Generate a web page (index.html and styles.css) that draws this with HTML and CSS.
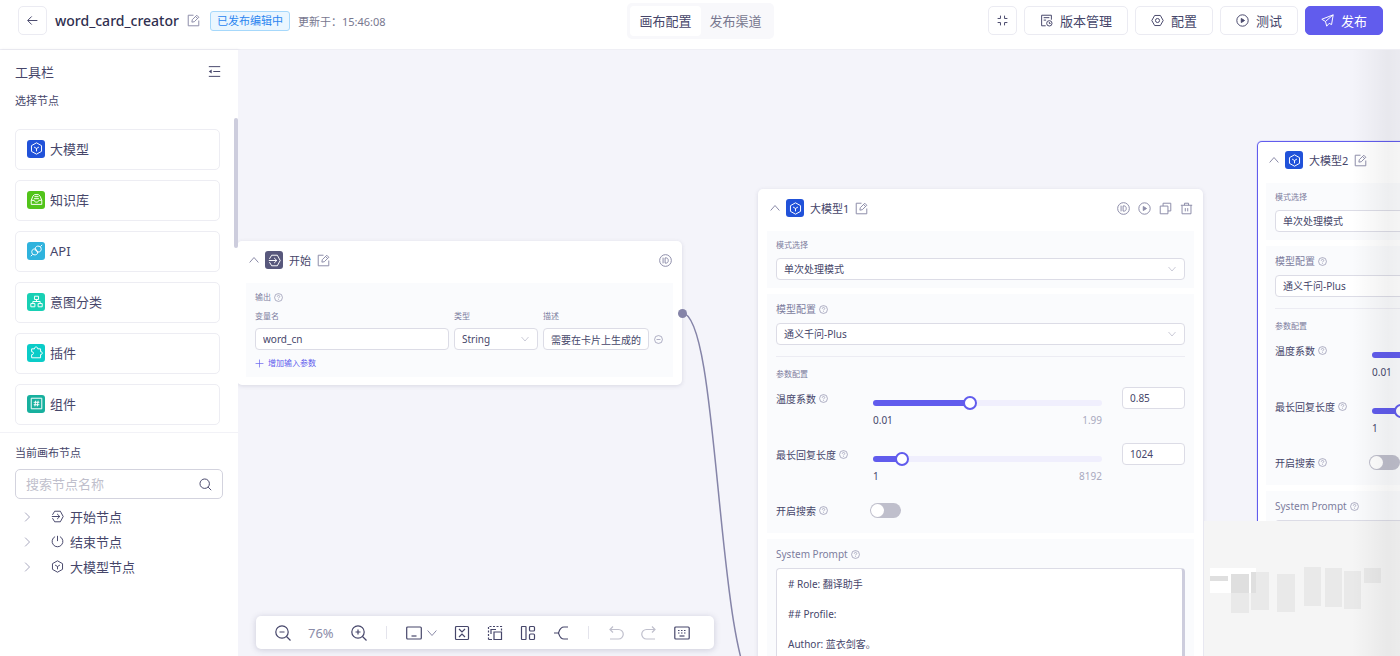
FILE: index.html
```
<!DOCTYPE html>
<html lang="zh-CN">

<head>
    <meta charset="utf-8">
    <meta name="viewport" content="width=device-width, initial-scale=1.0">
    <title>word_card_creator</title>
    <link rel="stylesheet" href="styles.css">
</head>

<body>

    <!-- icons -->
    <svg class="sprite" aria-hidden="true">
        <symbol id="i-back" viewBox="0 0 16 16"><path d="M14 8H2.500M7 3L2 8l5 5" /></symbol>
        <symbol id="i-edit" viewBox="0 0 16 16"><path d="M8 1.500H1.500v13h13V8M6 10l.5-3L12 1.500 14.500 4 9 9.500zM10.500 3L13 5.500" /></symbol>
        <symbol id="i-shrink" viewBox="0 0 16 16"><path d="M2 5.500h3.500V2M14 5.500h-3.500V2M2 10.500h3.500V14M14 10.500h-3.500V14" /></symbol>
        <symbol id="i-version" viewBox="0 0 16 16"><path d="M14 7V1.500H2v13h5M4.500 4.500h7M4.500 7.500h3" /><circle cx="11.500" cy="11.500" r="3.300" /><path d="M11.500 9.800v1.900h1.500" /></symbol>
        <symbol id="i-config" viewBox="0 0 16 16"><path d="M4.500 1.800h7L15 8l-3.500 6.200h-7L1 8z" /><circle cx="8" cy="8" r="2.500" /></symbol>
        <symbol id="i-play" viewBox="0 0 16 16"><circle cx="8" cy="8" r="7" /><path d="M6.500 5.500v5l4-2.500z" fill="currentColor" /></symbol>
        <symbol id="i-send" viewBox="0 0 16 16"><path d="M15 1L1 6.500l4.500 2.700L7 15l3-3.500L13 13zM15 1L5.500 9.200" /></symbol>
        <symbol id="i-fold" viewBox="0 0 16 16"><path d="M1 2h14M6.500 8H15M1 14h14" /><path d="M1 8l3.500-2.500v5z" fill="currentColor" stroke="none" /></symbol>
        <symbol id="i-model" viewBox="0 0 16 16"><path d="M8 1l6.200 3.500v7L8 15l-6.200-3.500v-7zM5 6.200L8 8l3-1.800M8 8v3.500" /></symbol>
        <symbol id="i-know" viewBox="0 0 16 16"><path d="M1.500 9L3.500 4 5.500 2h5l2 2 2 5v5h-13zM1.500 9H5c.5 3 5.500 3 6 0h3.500M5.500 4.500h5M5 7h6" /></symbol>
        <symbol id="i-api" viewBox="0 0 16 16"><path d="M6.500 6L4 6.500C1.500 8 2 10 3 12.500c2.500 1.500 5 1 6-.5l.5-2.500zM9.500 10L12 9.500C14.500 8 14 6 13 3.500c-2.500-1.500-5-1-6 .5L6.500 6zM3 13l-2 2M13 3l2-2M6 8.500l1-1M7.500 10l1-1" /></symbol>
        <symbol id="i-tree" viewBox="0 0 16 16"><path d="M5.500 1.500h5v4h-5zM1 10.500h5v4H1zM10 10.500h5v4h-5zM8 5.500V8M3.500 10.500V8h9v2.500" /></symbol>
        <symbol id="i-plugin" viewBox="0 0 16 16"><path d="M2 3.500h3.500c-.5-3 4.500-3 4 0H13V7c2.800-.5 2.800 4 0 3.500v4H2v-3.800c3 .3 3-4 0-3.700z" /></symbol>
        <symbol id="i-comp" viewBox="0 0 16 16"><path d="M1.500 1.500h13v13h-13zM7 4.500l-1 7M10 4.500l-1 7M4.500 6.500h7M4.500 9.500h7" /></symbol>
        <symbol id="i-start" viewBox="0 0 16 16"><path d="M1.800 6L4.500 1.500h7L15 8l-3.500 6.500h-7L1.800 10M1 8h10M7.500 4.800L10.800 8l-3.300 3.200" /></symbol>
        <symbol id="i-end" viewBox="0 0 16 16"><path d="M5 2a6.600 6.600 0 1 0 6 0M8 1v6.500" /></symbol>
        <symbol id="i-search" viewBox="0 0 16 16"><circle cx="7" cy="7" r="5.800" /><path d="M11.200 11.200L15 15" /></symbol>
        <symbol id="i-right" viewBox="0 0 16 16"><path d="M5 1l7 7-7 7" /></symbol>
        <symbol id="i-up" viewBox="0 0 16 16"><path d="M1 12l7-8 7 8" /></symbol>
        <symbol id="i-down" viewBox="0 0 16 16"><path d="M1 4l7 8 7-8" /></symbol>
        <symbol id="i-id" viewBox="0 0 16 16"><circle cx="8" cy="8" r="7.200" /><path d="M5 4.500v7M7.500 4.800v6.400h1.500c3.200 0 3.200-6.400 0-6.400z" /></symbol>
        <symbol id="i-copy" viewBox="0 0 16 16"><path d="M1.500 5h9.500v9.500H1.500zM5 5V1.500h9.500V11H11" /></symbol>
        <symbol id="i-trash" viewBox="0 0 16 16"><path d="M1 4h14M2.500 4v10.500h11V4M5.500 4V1.500h5V4M6.500 7.500v4M9.500 7.500v4" /></symbol>
        <symbol id="i-help" viewBox="0 0 16 16"><circle cx="8" cy="8" r="7" /><path d="M5.800 6.500c0-3 4.400-3 4.400-.2C10.200 7.800 8 7.800 8 9.500M8 11v1.300" /></symbol>
        <symbol id="i-minus" viewBox="0 0 16 16"><circle cx="8" cy="8" r="7" /><path d="M4.500 8h7" /></symbol>
        <symbol id="i-plus" viewBox="0 0 16 16"><path d="M8 1v14M1 8h14" /></symbol>
        <symbol id="i-zoomout" viewBox="0 0 16 16"><circle cx="7" cy="7" r="6.200" /><path d="M11.500 11.500l4 4M4.500 7h5" /></symbol>
        <symbol id="i-zoomin" viewBox="0 0 16 16"><circle cx="7" cy="7" r="6.200" /><path d="M11.500 11.500l4 4M4.500 7h5M7 4.500v5" /></symbol>
        <symbol id="i-screen" viewBox="0 0 16 16"><rect x=".7" y="2" width="14.600" height="12" rx="1" /><path d="M5.500 11h5" /></symbol>
        <symbol id="i-collapse" viewBox="0 0 16 16"><rect x="1.500" y="1.500" width="13" height="13" rx="1" /><path d="M5 4l3 3 3-3M5 12l3-3 3 3" /></symbol>
        <symbol id="i-select" viewBox="0 0 16 16"><path d="M1.500 14.500v-13h13v4" stroke-dasharray="2 1.500" /><path d="M7 7h7.500v7.500H7zM4 9V4.500h5M1.500 14.500H5" /></symbol>
        <symbol id="i-layout" viewBox="0 0 16 16"><rect x="1.500" y="1.500" width="4.500" height="13" rx=".5" /><rect x="9.500" y="1.500" width="5" height="4.500" rx="1" /><rect x="9.500" y="9" width="5" height="5.500" rx="1" /></symbol>
        <symbol id="i-branch" viewBox="0 0 16 16"><path d="M15 2h-4C7 2 6.500 5 5.500 8c1 3 1.500 6 5.500 6h4M1 8h4.500" /></symbol>
        <symbol id="i-undo" viewBox="0 0 16 16"><path d="M5 1.500L2 4.500l3 3M2 4.500h8.500a4.500 4.500 0 0 1 0 9.500H2" /></symbol>
        <symbol id="i-redo" viewBox="0 0 16 16"><path d="M11 1.500l3 3-3 3M14 4.500H5.500a4.500 4.500 0 0 0 0 9.500H14" /></symbol>
        <symbol id="i-keyboard" viewBox="0 0 16 16"><rect x=".8" y="2" width="14.400" height="12" rx="1" /><path d="M4 5.500h8M4 8h8" stroke-dasharray="1.500 1.500" /><path d="M5.500 11h5" /></symbol>
    </svg>

    <header class="topbar">
        <div class="topbar-left">
            <button class="btn btn-square" aria-label="返回"><svg class="icon"><use href="#i-back" /></svg></button>
            <h1>word_card_creator</h1>
            <svg class="icon muted"><use href="#i-edit" /></svg>
            <span class="tag">已发布编辑中</span>
            <span class="updated">更新于：15:46:08</span>
        </div>
        <nav class="tabs">
            <button class="tab active">画布配置</button>
            <button class="tab">发布渠道</button>
        </nav>
        <div class="topbar-right">
            <button class="btn btn-square" aria-label="收起"><svg class="icon"><use href="#i-shrink" /></svg></button>
            <button class="btn"><svg class="icon"><use href="#i-version" /></svg>版本管理</button>
            <button class="btn"><svg class="icon"><use href="#i-config" /></svg>配置</button>
            <button class="btn"><svg class="icon"><use href="#i-play" /></svg>测试</button>
            <button class="btn btn-primary"><svg class="icon"><use href="#i-send" /></svg>发布</button>
        </div>
    </header>

    <main>
        <aside class="sidebar">
            <div class="sidebar-title">
                <h2>工具栏</h2>
                <button class="plain" aria-label="收起工具栏"><svg class="icon"><use href="#i-fold" /></svg></button>
            </div>
            <h3>选择节点</h3>
            <div class="tools">
                <button class="tool"><span class="badge blue"><svg class="icon"><use href="#i-model" /></svg></span>大模型</button>
                <button class="tool"><span class="badge green"><svg class="icon"><use href="#i-know" /></svg></span>知识库</button>
                <button class="tool"><span class="badge sky"><svg class="icon"><use href="#i-api" /></svg></span>API</button>
                <button class="tool"><span class="badge mint"><svg class="icon"><use href="#i-tree" /></svg></span>意图分类</button>
                <button class="tool"><span class="badge cyan"><svg class="icon"><use href="#i-plugin" /></svg></span>插件</button>
                <button class="tool"><span class="badge teal"><svg class="icon"><use href="#i-comp" /></svg></span>组件</button>
                <span class="scrollbar"></span>
            </div>
            <h3>当前画布节点</h3>
            <label class="search">
                <input type="text" placeholder="搜索节点名称" aria-label="搜索节点名称">
                <svg class="icon"><use href="#i-search" /></svg>
            </label>
            <ul class="tree">
                <li><svg class="icon arrow"><use href="#i-right" /></svg><svg class="icon"><use href="#i-start" /></svg>开始节点</li>
                <li><svg class="icon arrow"><use href="#i-right" /></svg><svg class="icon"><use href="#i-end" /></svg>结束节点</li>
                <li><svg class="icon arrow"><use href="#i-right" /></svg><svg class="icon"><use href="#i-model" /></svg>大模型节点</li>
            </ul>
        </aside>

        <section class="canvas">
            <svg class="edges">
                <path d="M444 263C482 263 478 615 520 645" />
            </svg>

            <article class="node node-start">
                <header>
                    <svg class="icon chevron"><use href="#i-up" /></svg>
                    <span class="badge slate"><svg class="icon"><use href="#i-start" /></svg></span>
                    <h4>开始</h4>
                    <svg class="icon"><use href="#i-edit" /></svg>
                    <div class="actions">
                        <button class="plain" aria-label="ID"><svg class="icon"><use href="#i-id" /></svg></button>
                    </div>
                </header>
                <section>
                    <p class="small">输出 <svg class="icon help"><use href="#i-help" /></svg></p>
                    <div class="params">
                        <label class="small" for="var-name">变量名</label>
                        <label class="small" for="var-type">类型</label>
                        <label class="small" for="var-desc">描述</label>
                        <span></span>
                        <input id="var-name" type="text" value="word_cn">
                        <div class="select">
                            <select id="var-type"><option>String</option></select>
                            <svg class="icon"><use href="#i-down" /></svg>
                        </div>
                        <input id="var-desc" type="text" value="需要在卡片上生成的单词">
                        <button class="plain" aria-label="删除"><svg class="icon help"><use href="#i-minus" /></svg></button>
                    </div>
                    <button class="plain add"><svg class="icon help"><use href="#i-plus" /></svg>增加输入参数</button>
                </section>
                <span class="port"></span>
            </article>

            <article class="node node-llm1">
                <header>
                    <svg class="icon chevron"><use href="#i-up" /></svg>
                    <span class="badge blue"><svg class="icon"><use href="#i-model" /></svg></span>
                    <h4>大模型1</h4>
                    <svg class="icon"><use href="#i-edit" /></svg>
                    <div class="actions">
                        <button class="plain" aria-label="ID"><svg class="icon"><use href="#i-id" /></svg></button>
                        <button class="plain" aria-label="运行"><svg class="icon"><use href="#i-play" /></svg></button>
                        <button class="plain" aria-label="复制"><svg class="icon"><use href="#i-copy" /></svg></button>
                        <button class="plain" aria-label="删除"><svg class="icon"><use href="#i-trash" /></svg></button>
                    </div>
                </header>
                <section>
                    <label class="small" for="mode1">模式选择</label>
                    <div class="select">
                        <select id="mode1"><option>单次处理模式</option></select>
                        <svg class="icon"><use href="#i-down" /></svg>
                    </div>
                </section>
                <section>
                    <label class="caption" for="model1">模型配置 <svg class="icon help"><use href="#i-help" /></svg></label>
                    <div class="select">
                        <select id="model1"><option>通义千问-Plus</option></select>
                        <svg class="icon"><use href="#i-down" /></svg>
                    </div>
                    <hr>
                    <p class="small">参数配置</p>
                    <div class="row">
                        <label for="temp1">温度系数 <svg class="icon help"><use href="#i-help" /></svg></label>
                        <div class="range">
                            <div class="slider" style="--value: 42.4%"><input id="temp1" type="range" min="0.01" max="1.99" step="0.01" value="0.85"></div>
                            <div class="limits"><span>0.01</span><span>1.99</span></div>
                        </div>
                        <input type="text" value="0.85" aria-label="温度系数">
                    </div>
                    <div class="row">
                        <label for="len1">最长回复长度 <svg class="icon help"><use href="#i-help" /></svg></label>
                        <div class="range">
                            <div class="slider" style="--value: 12.5%"><input id="len1" type="range" min="1" max="8192" value="1024"></div>
                            <div class="limits"><span>1</span><span>8192</span></div>
                        </div>
                        <input type="text" value="1024" aria-label="最长回复长度">
                    </div>
                    <div class="row">
                        <label for="search1">开启搜索 <svg class="icon help"><use href="#i-help" /></svg></label>
                        <input id="search1" class="switch" type="checkbox">
                    </div>
                </section>
                <section>
                    <label class="caption" for="prompt1">System Prompt <svg class="icon help"><use href="#i-help" /></svg></label>
                    <textarea id="prompt1"># Role: 翻译助手

## Profile:

Author: 蓝衣剑客。</textarea>
                </section>
            </article>

            <article class="node node-llm2 selected">
                <header>
                    <svg class="icon chevron"><use href="#i-up" /></svg>
                    <span class="badge blue"><svg class="icon"><use href="#i-model" /></svg></span>
                    <h4>大模型2</h4>
                    <svg class="icon"><use href="#i-edit" /></svg>
                </header>
                <section>
                    <label class="small" for="mode2">模式选择</label>
                    <div class="select">
                        <select id="mode2"><option>单次处理模式</option></select>
                        <svg class="icon"><use href="#i-down" /></svg>
                    </div>
                </section>
                <section>
                    <label class="caption" for="model2">模型配置 <svg class="icon help"><use href="#i-help" /></svg></label>
                    <div class="select">
                        <select id="model2"><option>通义千问-Plus</option></select>
                        <svg class="icon"><use href="#i-down" /></svg>
                    </div>
                    <hr>
                    <p class="small">参数配置</p>
                    <div class="row">
                        <label for="temp2">温度系数 <svg class="icon help"><use href="#i-help" /></svg></label>
                        <div class="range">
                            <div class="slider" style="--value: 42.4%"><input id="temp2" type="range" min="0.01" max="1.99" step="0.01" value="0.85"></div>
                            <div class="limits"><span>0.01</span><span>1.99</span></div>
                        </div>
                        <input type="text" value="0.85" aria-label="温度系数">
                    </div>
                    <div class="row">
                        <label for="len2">最长回复长度 <svg class="icon help"><use href="#i-help" /></svg></label>
                        <div class="range">
                            <div class="slider" style="--value: 12.5%"><input id="len2" type="range" min="1" max="8192" value="1024"></div>
                            <div class="limits"><span>1</span><span>8192</span></div>
                        </div>
                        <input type="text" value="1024" aria-label="最长回复长度">
                    </div>
                    <div class="row">
                        <label for="search2">开启搜索 <svg class="icon help"><use href="#i-help" /></svg></label>
                        <input id="search2" class="switch" type="checkbox">
                    </div>
                </section>
                <section>
                    <label class="caption" for="prompt2">System Prompt <svg class="icon help"><use href="#i-help" /></svg></label>
                    <textarea id="prompt2"></textarea>
                </section>
            </article>

            <svg class="minimap" viewBox="0 0 196 135">
                <rect class="view" x="6" y="47" width="46" height="25" />
                <rect class="inside" x="6" y="55" width="18" height="5" />
                <rect class="inside" x="27" y="53" width="18" height="19" />
                <rect x="27" y="72" width="18" height="20" />
                <rect class="inside" x="47" y="51" width="5" height="21" />
                <path d="M52 51h13v38H47V72h5z" />
                <rect x="73" y="53" width="18" height="38" />
                <rect x="100" y="46" width="17" height="39" />
                <rect x="121" y="47" width="17" height="39" />
                <rect x="140" y="50" width="17" height="38" />
                <rect x="160" y="47" width="17" height="15" />
            </svg>

            <div class="edge-shade"></div>

            <div class="toolbar">
                <button class="plain" aria-label="缩小"><svg class="icon"><use href="#i-zoomout" /></svg></button>
                <span class="zoom">76%</span>
                <button class="plain" aria-label="放大"><svg class="icon"><use href="#i-zoomin" /></svg></button>
                <span class="sep"></span>
                <button class="plain view-btn" aria-label="视图"><svg class="icon"><use href="#i-screen" /></svg><svg class="icon chevron"><use href="#i-down" /></svg></button>
                <button class="plain" aria-label="折叠"><svg class="icon"><use href="#i-collapse" /></svg></button>
                <button class="plain" aria-label="框选"><svg class="icon"><use href="#i-select" /></svg></button>
                <button class="plain" aria-label="布局"><svg class="icon"><use href="#i-layout" /></svg></button>
                <button class="plain" aria-label="连线"><svg class="icon"><use href="#i-branch" /></svg></button>
                <span class="sep"></span>
                <button class="plain off" aria-label="撤销"><svg class="icon"><use href="#i-undo" /></svg></button>
                <button class="plain off" aria-label="重做"><svg class="icon"><use href="#i-redo" /></svg></button>
                <button class="plain" aria-label="快捷键"><svg class="icon"><use href="#i-keyboard" /></svg></button>
            </div>
        </section>
    </main>

</body>

</html>
```
FILE: styles.css
```
* {
    box-sizing: border-box;
}

body {
    margin: 0;
    height: 100vh;
    display: flex;
    flex-direction: column;
    overflow: hidden;
    font-family: "Noto Sans", "Noto Sans CJK SC", sans-serif;
    font-size: 13px;
    color: #46466a;
    background-color: white;
}

h1, h2, h3, h4, p, ul {
    margin: 0;
    padding: 0;
    font-weight: normal;
}

button, input, select, textarea {
    font: inherit;
    color: inherit;
    margin: 0;
}

button {
    cursor: pointer;
}

.sprite {
    position: absolute;
    width: 0;
    height: 0;
}

.icon {
    display: block;
    flex: none;
    width: 13px;
    height: 13px;
    fill: none;
    stroke: currentColor;
    stroke-width: 1.2;
}

.plain {
    display: flex;
    align-items: center;
    border: 0;
    padding: 0;
    background: none;
}

/* top bar */
.topbar {
    display: grid;
    grid-template-columns: 1fr auto 1fr;
    align-items: center;
    height: 50px;
    padding: 0 17px 8px 18px;
    border-bottom: 1px solid #efeff5;
}

.topbar-left, .topbar-right {
    display: flex;
    align-items: center;
}

.topbar-left {
    gap: 8px;
}

.topbar-right {
    gap: 7px;
    justify-content: flex-end;
}

h1 {
    font-size: 14px;
    font-weight: 500;
    color: #2f2f50;
}

.muted {
    color: #8b8ba8;
}

.tag {
    height: 20px;
    line-height: 18px;
    margin-left: 2px;
    padding: 0 6px;
    border: 1px solid #a6d8fb;
    border-radius: 3px;
    background-color: #eaf6ff;
    color: #2b85f0;
    font-size: 11px;
}

.updated {
    font-size: 11px;
    color: #77778f;
}

.btn {
    display: flex;
    align-items: center;
    gap: 7px;
    height: 29px;
    padding: 0 15px;
    border: 1px solid #ebebf2;
    border-radius: 5px;
    background-color: white;
}

.btn-square {
    width: 29px;
    padding: 0;
    justify-content: center;
}

.btn-primary {
    border-color: #615ced;
    background-color: #615ced;
    color: white;
}

.tabs {
    display: flex;
    padding: 3px;
    border-radius: 5px;
    background-color: #f8f8fb;
}

.tab {
    height: 30px;
    padding: 0 9px;
    border: 0;
    border-radius: 4px;
    background: none;
    color: #77778f;
}

.tab.active {
    background-color: white;
    color: #46466a;
}

main {
    flex: 1;
    display: flex;
    min-height: 0;
}

/* sidebar */
.sidebar {
    flex: none;
    width: 238px;
    padding-top: 11px;
    box-shadow: 1px 0 3px rgba(60, 60, 100, .1);
}

.sidebar-title {
    display: flex;
    justify-content: space-between;
    align-items: center;
    height: 20px;
    padding: 0 17px 0 15px;
}

h2 {
    font-size: 13px;
}

h3 {
    margin: 12px 15px 0;
    font-size: 11px;
    line-height: 16px;
}

.tools {
    position: relative;
    display: flex;
    flex-direction: column;
    gap: 10px;
    margin-top: 9px;
    padding: 11px 18px 7px 15px;
    border-bottom: 1px solid #f2f2f7;
}

.tool {
    display: flex;
    align-items: center;
    gap: 5px;
    height: 41px;
    padding: 0 11px 2px;
    border: 1px solid #ededf3;
    border-radius: 5px;
    background-color: white;
}

.scrollbar {
    position: absolute;
    top: 0;
    right: 0;
    width: 4px;
    height: 130px;
    border-radius: 2px;
    background-color: #cdcddd;
}

.badge {
    display: flex;
    align-items: center;
    justify-content: center;
    flex: none;
    width: 18px;
    height: 18px;
    border-radius: 3px;
    color: white;
}

.blue {
    background-color: #2152d9;
}

.green {
    background-color: #52c41a;
}

.sky {
    background-color: #2fb3dd;
}

.mint {
    background-color: #18d0b4;
}

.cyan {
    background-color: #0accc8;
}

.teal {
    background-color: #17b09e;
}

.slate {
    background-color: #58587c;
}

.search {
    display: flex;
    align-items: center;
    height: 30px;
    margin: 8px 15px 5px;
    padding: 0 10px;
    border: 1px solid #d3d3de;
    border-radius: 5px;
}

.search input {
    flex: 1;
    min-width: 0;
    border: 0;
    padding: 0;
    outline: none;
    background: none;
}

.search input::placeholder {
    color: #bfbfcc;
}

.tree {
    list-style: none;
}

.tree li {
    display: flex;
    align-items: center;
    gap: 6px;
    height: 25px;
    padding-left: 22px;
}

.tree .arrow {
    width: 10px;
    height: 10px;
    margin-right: 13px;
    color: #8b8ba8;
}

/* canvas */
.canvas {
    position: relative;
    flex: 1;
    min-width: 0;
    overflow: hidden;
    background-color: #f4f4fa;
}

.edges {
    position: absolute;
    width: 100%;
    height: 100%;
    fill: none;
    stroke: #8584a8;
    stroke-width: 1.5;
}

.node {
    position: absolute;
    width: 445px;
    padding: 0 9px 8px;
    border-radius: 5px;
    background-color: white;
    box-shadow: 0 1px 4px rgba(60, 60, 100, .15);
    font-size: 10px;
}

.node-start {
    left: -1px;
    top: 191px;
}

.node-llm1 {
    left: 520px;
    top: 139px;
}

.node-llm2 {
    left: 1019px;
    top: 91px;
}

.selected {
    box-shadow: inset 0 0 0 1px #615ced, 0 0 1px #615ced;
}

.node > header {
    display: flex;
    align-items: center;
    gap: 6px;
    height: 38px;
    margin: 0 1px 4px 3px;
    color: #8b8ba8;
}

.node h4 {
    font-size: 11px;
    color: #46466a;
}

.chevron {
    width: 10px;
    height: 10px;
    stroke-width: 1.6;
}

.actions {
    display: flex;
    gap: 8px;
    margin-left: auto;
}

.node > section {
    display: flex;
    flex-direction: column;
    gap: 7px;
    padding: 8px 9px;
    background-color: #fafbfd;
}

.node > section + section {
    margin-top: 6px;
}

.small, .caption {
    display: flex;
    align-items: center;
    gap: 3px;
    color: #7d7d9e;
}

.small {
    font-size: 8px;
    line-height: 12px;
}

.caption {
    line-height: 14px;
}

.help {
    width: 9px;
    height: 9px;
    color: #8b8ba8;
}

.node input[type="text"], .node select {
    width: 100%;
    min-width: 0;
    height: 22px;
    padding: 0 7px;
    border: 1px solid #dcdce6;
    border-radius: 4px;
    background-color: white;
}

.node select {
    appearance: none;
}

.select {
    display: grid;
    align-items: center;
}

.select > * {
    grid-area: 1 / 1;
}

.select .icon {
    justify-self: end;
    width: 8px;
    height: 8px;
    margin-right: 9px;
    color: #a9a9bd;
    pointer-events: none;
}

.params {
    display: grid;
    grid-template-columns: 1fr 84px 106px 10px;
    gap: 6px 5px;
    align-items: center;
}

.add {
    gap: 4px;
    font-size: 8px;
    line-height: 12px;
    color: #615ced;
}

.add .icon {
    color: inherit;
}

.port {
    position: absolute;
    right: -5px;
    top: 68px;
    width: 9px;
    height: 9px;
    border-radius: 50%;
    background-color: #8584a8;
}

hr {
    width: 100%;
    margin: 4px 0;
    border: 0;
    border-top: 1px solid #ececf3;
}

.row {
    display: grid;
    grid-template-columns: 94px 1fr 63px;
    align-items: start;
    min-height: 49px;
}

.row:last-child {
    min-height: 26px;
}

.row label {
    display: flex;
    align-items: center;
    gap: 3px;
    height: 22px;
}

.range {
    padding: 13px 20px 0 3px;
}

.slider {
    display: flex;
    align-items: center;
    height: 6px;
    border-radius: 3px;
    background: linear-gradient(to right, #615ced var(--value), #f0effd var(--value));
}

/* half a thumb wider on each side, so the thumb's centre follows the track */
.slider input {
    appearance: none;
    flex: 1;
    height: 14px;
    margin: 0 -7px;
    background: none;
}

.slider input::-webkit-slider-thumb {
    appearance: none;
    width: 14px;
    height: 14px;
    border: 2px solid #615ced;
    border-radius: 50%;
    background-color: white;
}

.limits {
    display: flex;
    justify-content: space-between;
    margin-top: 7px;
    line-height: 14px;
}

.limits span:last-child {
    color: #a9a9bd;
}

.switch {
    appearance: none;
    width: 31px;
    height: 15px;
    margin-top: 4px;
    border-radius: 8px;
    background-color: #bfbfcc;
}

.switch::before {
    content: "";
    display: block;
    width: 13px;
    height: 13px;
    margin: 1px;
    border-radius: 50%;
    background-color: white;
}

textarea {
    display: block;
    height: 160px;
    padding: 8px 11px;
    border: 1px solid #dcdce6;
    border-right: 3px solid #cdcddd;
    border-radius: 4px;
    resize: none;
    overflow: hidden;
    line-height: 15px;
}

.minimap {
    position: absolute;
    right: 0;
    bottom: 0;
    width: 196px;
    height: 135px;
    background-color: #f5f5f5;
    fill: #e9e9e9;
}

.minimap .view {
    fill: white;
}

.minimap .inside {
    fill: #dfdfdf;
}

.edge-shade {
    position: absolute;
    top: 0;
    right: 0;
    bottom: 0;
    width: 48px;
    background: linear-gradient(to right, transparent, rgba(0, 0, 0, .05) 75%, rgba(0, 0, 0, .04));
    pointer-events: none;
}

.toolbar {
    position: absolute;
    left: 18px;
    bottom: 7px;
    display: flex;
    align-items: center;
    gap: 17px;
    height: 33px;
    padding: 0 24px 0 19px;
    border-radius: 5px;
    background-color: white;
    box-shadow: 0 1px 6px rgba(60, 60, 100, .22);
}

.toolbar .icon {
    width: 16px;
    height: 16px;
}

.toolbar .chevron {
    width: 10px;
    height: 10px;
    color: #8b8ba8;
}

.view-btn {
    gap: 5px;
}

.zoom {
    color: #8b8ba8;
}

.sep {
    width: 1px;
    height: 13px;
    margin: 0 2px;
    background-color: #e4e4ec;
}

.off {
    color: #bfbfcc;
}
```
